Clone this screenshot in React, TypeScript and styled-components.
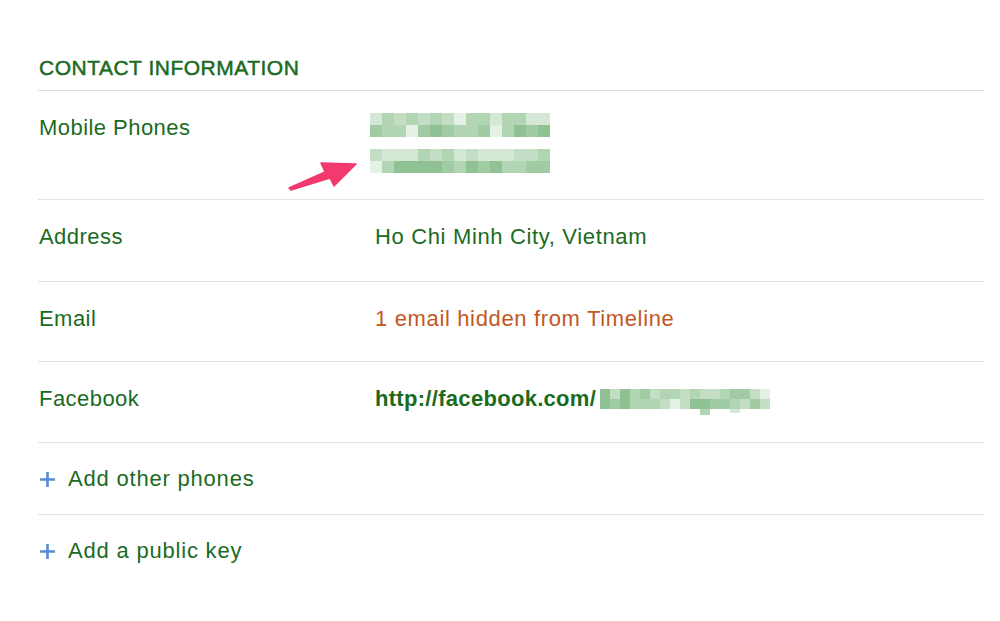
import React from "react";
import styled, { createGlobalStyle } from "styled-components";

const Global = createGlobalStyle`
  html, body { margin: 0; padding: 0; background: #ffffff; }
  body { font-family: "Liberation Sans", Arial, Helvetica, sans-serif; }
`;

const GREEN = "#1b6b1f";

const Page = styled.div`
  position: relative;
  width: 1000px;
  height: 621px;
  padding: 0 16px 0 38px;
  box-sizing: border-box;
  overflow: hidden;
`;

const Header = styled.h2`
  margin: 0;
  padding: 55px 0 9px 1px;
  font-size: 21px;
  line-height: 26px;
  font-weight: 400;
  letter-spacing: 0.5px;
  color: ${GREEN};
  -webkit-text-stroke: 0.5px ${GREEN};
  border-bottom: 1px solid #dedede;
`;

const Row = styled.div<{ $bottom: number }>`
  display: grid;
  grid-template-columns: 334px 1fr;
  padding: 24px 0 ${(p) => p.$bottom}px 1px;
  border-bottom: 1px solid #e3e3e3;
`;

const Label = styled.div`
  font-size: 22px;
  line-height: 26px;
  letter-spacing: 0.45px;
  color: ${GREEN};
`;

const Value = styled.div<{ $tone?: "green" | "orange" }>`
  display: flex;
  flex-direction: column;
  gap: 14px;
  padding-left: 2px;
  font-size: 22px;
  line-height: 26px;
  letter-spacing: 0.65px;
  color: ${(p) => (p.$tone === "orange" ? "#c2581f" : GREEN)};
`;

const Link = styled.div`
  display: flex;
  align-items: center;
  height: 26px;
  font-weight: 700;
  letter-spacing: 0.3px;
  color: ${GREEN};
`;

const Blur = styled.div`
  display: block;
  line-height: 0;
  margin-left: -5px;
  margin-top: -2px;
`;

const AddRow = styled.div<{ $last?: boolean }>`
  display: flex;
  align-items: center;
  gap: 12px;
  padding: 23px 0 22px 1px;
  border-bottom: ${(p) => (p.$last ? "none" : "1px solid #e3e3e3")};
  font-size: 22px;
  line-height: 26px;
  letter-spacing: 0.8px;
  color: ${GREEN};
`;

const Arrow = styled.svg`
  position: absolute;
  left: 286px;
  top: 157px;
`;

const palette = ["#d5e8d5", "#c3dec4", "#b2d5b3", "#a1cba3", "#8fc192", "#e6f1e6"];

function Pixels({ cols, rows, cw, ch, seed }: { cols: number; rows: number; cw: number; ch: number; seed: number }) {
  const cells: React.ReactNode[] = [];
  let s = seed;
  const rnd = () => {
    s = (s * 9301 + 49297) % 233280;
    return s / 233280;
  };
  for (let r = 0; r < rows; r++) {
    for (let c = 0; c < cols; c++) {
      const base = r === 0 ? 0 : 2;
      const idx = Math.min(palette.length - 2, Math.floor(base + rnd() * 3));
      const color = rnd() < 0.08 ? palette[5] : palette[idx];
      cells.push(<rect key={`${r}-${c}`} x={c * cw} y={r * ch} width={cw} height={ch} fill={color} />);
    }
  }
  return (
    <svg width={cols * cw} height={rows * ch}>
      {cells}
    </svg>
  );
}

function FbPixels() {
  const cells: React.ReactNode[] = [];
  let s = 17;
  const rnd = () => {
    s = (s * 9301 + 49297) % 233280;
    return s / 233280;
  };
  const cols = 17;
  for (let r = 0; r < 2; r++) {
    for (let c = 0; c < cols; c++) {
      const idx = Math.floor(1 + rnd() * 4);
      const color = rnd() < 0.12 ? palette[5] : palette[idx];
      cells.push(<rect key={`${r}-${c}`} x={c * 10} y={r * 10} width={10} height={10} fill={color} />);
    }
  }
  cells.push(<rect key="x1" x={100} y={20} width={10} height={6} fill="#b2d5b3" />);
  cells.push(<rect key="x2" x={130} y={20} width={10} height={4} fill="#d5e8d5" />);
  return (
    <svg width={170} height={26} style={{ marginLeft: 4, marginTop: 6 }}>
      {cells}
    </svg>
  );
}

const Plus = () => (
  <svg width="17" height="17" viewBox="0 0 17 17">
    <path d="M8.5 1v15M1 8.5h15" stroke="#5b8ad8" strokeWidth="2.6" strokeLinecap="butt" />
  </svg>
);

export default function App() {
  return (
    <Page>
      <Global />
      <Header>CONTACT INFORMATION</Header>
      <Row $bottom={26}>
        <Label>Mobile Phones</Label>
        <Value>
          <Blur>
            <Pixels cols={15} rows={2} cw={12} ch={12} seed={3} />
          </Blur>
          <Blur>
            <Pixels cols={15} rows={2} cw={12} ch={12} seed={11} />
          </Blur>
        </Value>
      </Row>
      <Row $bottom={31}>
        <Label>Address</Label>
        <Value>Ho Chi Minh City, Vietnam</Value>
      </Row>
      <Row $bottom={29}>
        <Label>Email</Label>
        <Value $tone="orange">1 email hidden from Timeline</Value>
      </Row>
      <Row $bottom={30}>
        <Label>Facebook</Label>
        <Value>
          <Link>
            http://facebook.com/
            <FbPixels />
          </Link>
        </Value>
      </Row>
      <AddRow>
        <Plus />
        Add other phones
      </AddRow>
      <AddRow $last>
        <Plus />
        Add a public key
      </AddRow>
      <Arrow width="76" height="36" viewBox="0 0 76 36">
        <path
          d="M3 31 L39 15 L35 6 L70 7 L48 29 L44 21 L5 33 Z"
          fill="#f23a6e"
          stroke="#f23a6e"
          strokeWidth="1.5"
          strokeLinejoin="round"
        />
      </Arrow>
    </Page>
  );
}
